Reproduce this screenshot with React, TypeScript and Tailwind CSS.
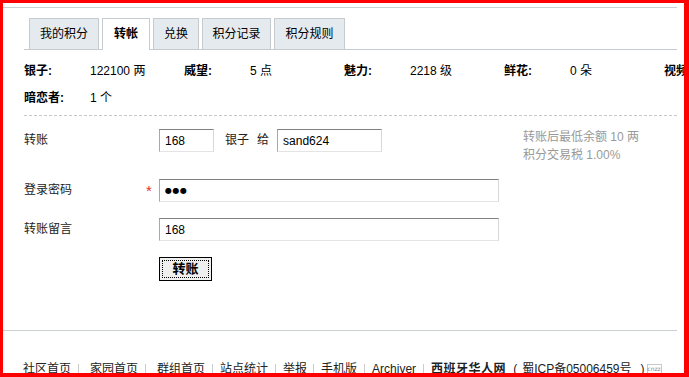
import React from 'react';

const tabs = [
  { name: '我的积分', w: 'w-[70px]' },
  { name: '转帐', w: 'w-[48px]', active: true },
  { name: '兑换', w: 'w-[46px]' },
  { name: '积分记录', w: 'w-[69px]' },
  { name: '积分规则', w: 'w-[71px]' },
];

const stats = [
  { label: '银子:', value: '122100 两' },
  { label: '威望:', value: '5 点' },
  { label: '魅力:', value: '2218 级' },
  { label: '鲜花:', value: '0 朵' },
  { label: '视频认证:', value: '否' },
];

// separator margins after each link, taken from the reference
const footerLinks = [
  { name: '社区首页', sep: 'ml-[7px] mr-[11px]' },
  { name: '家园首页', sep: 'ml-[7px] mr-[11px]' },
  { name: '群组首页', sep: 'ml-[7px] mr-[7px]' },
  { name: '站点统计', sep: 'ml-[7px] mr-[7px]' },
  { name: '举报', sep: 'ml-[6px] mr-[7px]' },
  { name: '手机版', sep: 'ml-[7px] mr-[7px]' },
  { name: 'Archiver', sep: 'ml-[7px] mr-[7px]' },
];

const inputCls =
  'h-[23px] border border-t-[#7f7f7f] border-l-[#a8a8a8] border-b-[#e4e4e4] border-r-[#d8d8d8] bg-white px-[5px] text-black outline-none';

const StatItem: React.FC<{ label: string; value: string }> = ({ label, value }) => (
  <div className="flex w-[160px] shrink-0">
    <span className="w-[66px] shrink-0 font-bold">{label}</span>
    <span>{value}</span>
  </div>
);

export default function App() {
  return (
    <div className="w-[689px] h-[377px] overflow-hidden bg-white border-solid border-[#ff0000] border-t-[3px] border-l-[3px] border-r-[5px] border-b-[4px] text-[12px] text-black font-['Liberation_Sans','Noto_Sans_CJK_SC',sans-serif]">
      <div className="w-[674px]">
        <div className="h-[4px]" />
        <div className="h-px bg-[#cbd0d3]" />

        <div className="pl-[21px] pt-[10px]">
          {/* tabs */}
          <div className="flex items-end gap-[3px] pl-[5px] border-b border-[#c6cbcf]">
            {tabs.map(t =>
              t.active ? (
                <div
                  key={t.name}
                  className={`${t.w} h-[32px] -mb-px flex items-center justify-center border border-b-0 border-[#c6cbcf] bg-white font-bold pb-px`}
                >
                  {t.name}
                </div>
              ) : (
                <div
                  key={t.name}
                  className={`${t.w} h-[31px] flex items-center justify-center border border-b-0 border-[#c6cbcf] bg-[#e5eaef]`}
                >
                  {t.name}
                </div>
              )
            )}
          </div>

          {/* stats */}
          <div className="mt-[7px] whitespace-nowrap">
            <div className="flex h-[27px] items-center">
              {stats.map(s => (
                <StatItem key={s.label} label={s.label} value={s.value} />
              ))}
            </div>
            <div className="flex h-[27px] items-center">
              <StatItem label="暗恋者:" value="1 个" />
            </div>
          </div>
          <div className="mt-[4px] border-t border-dashed border-[#c8c8c8]" />

          {/* form */}
          <div className="pt-[13px] text-[#222]">
            <div className="flex items-start h-[50px]">
              <div className="w-[122px] shrink-0 leading-[23px]">转账</div>
              <div className="w-[13px] shrink-0" />
              <input className={`${inputCls} w-[55px] text-[12px]`} defaultValue="168" />
              <span className="ml-[11px] leading-[23px]">银子</span>
              <span className="ml-[8px] leading-[23px]">给</span>
              <input className={`${inputCls} ml-[8px] w-[105px] text-[12px]`} defaultValue="sand624" />
              <div className="ml-[141px] -mt-px leading-[18px] text-[#999] whitespace-nowrap">
                <div>转账后最低余额 10 两</div>
                <div>积分交易税 1.00%</div>
              </div>
            </div>

            <div className="flex items-start">
              <div className="w-[122px] shrink-0 leading-[23px]">登录密码</div>
              <div className="w-[13px] shrink-0 leading-[23px] text-[15px] text-[#e03030]">*</div>
              <input
                className={`${inputCls} w-[340px] text-[8px] tracking-[0.5px] font-['DejaVu_Sans',sans-serif]`}
                defaultValue="●●●"
              />
            </div>

            <div className="flex items-start mt-[16px]">
              <div className="w-[122px] shrink-0 leading-[23px]">转账留言</div>
              <div className="w-[13px] shrink-0" />
              <input className={`${inputCls} w-[340px] text-[12px]`} defaultValue="168" />
            </div>

            <div className="flex mt-[16px] pl-[135px]">
              <button className="w-[53px] h-[24px] border border-black bg-[#efefef] p-[2px] flex">
                <span className="flex-1 flex items-center justify-center border border-dotted border-black font-bold text-[13px] text-black">
                  转账
                </span>
              </button>
            </div>
          </div>
        </div>

        <div className="mt-[49px] h-px bg-[#cbd0d3]" />

        {/* footer */}
        <div className="pt-[28px] pl-[20px] flex items-center whitespace-nowrap leading-[17px] text-[#222]">
          {footerLinks.map(l => (
            <React.Fragment key={l.name}>
              <span>{l.name}</span>
              <span className={`${l.sep} inline-block w-px h-[12px] bg-[#cccccc]`} />
            </React.Fragment>
          ))}
          <span className="font-bold tracking-[0.5px]">西班牙华人网</span>
          <span className="ml-[7px]">(</span>
          <span className="ml-[5px]">蜀ICP备05006459号</span>
          <span className="ml-[9px]">)</span>
          <div className="ml-[2px] mt-[5px] w-[15px] h-[16px] border border-[#c8c8c8] flex flex-col items-center">
            <span className="text-[6px] leading-[7px] text-[#8a8a8a] font-['DejaVu_Sans',sans-serif]">cnzz</span>
            <div className="flex items-end gap-px h-[7px]">
              <span className="w-[2px] h-[3px] bg-[#e04040]" />
              <span className="w-[2px] h-[6px] bg-[#40a040]" />
              <span className="w-[2px] h-[4px] bg-[#4060d0]" />
            </div>
          </div>
        </div>
      </div>
    </div>
  );
}
